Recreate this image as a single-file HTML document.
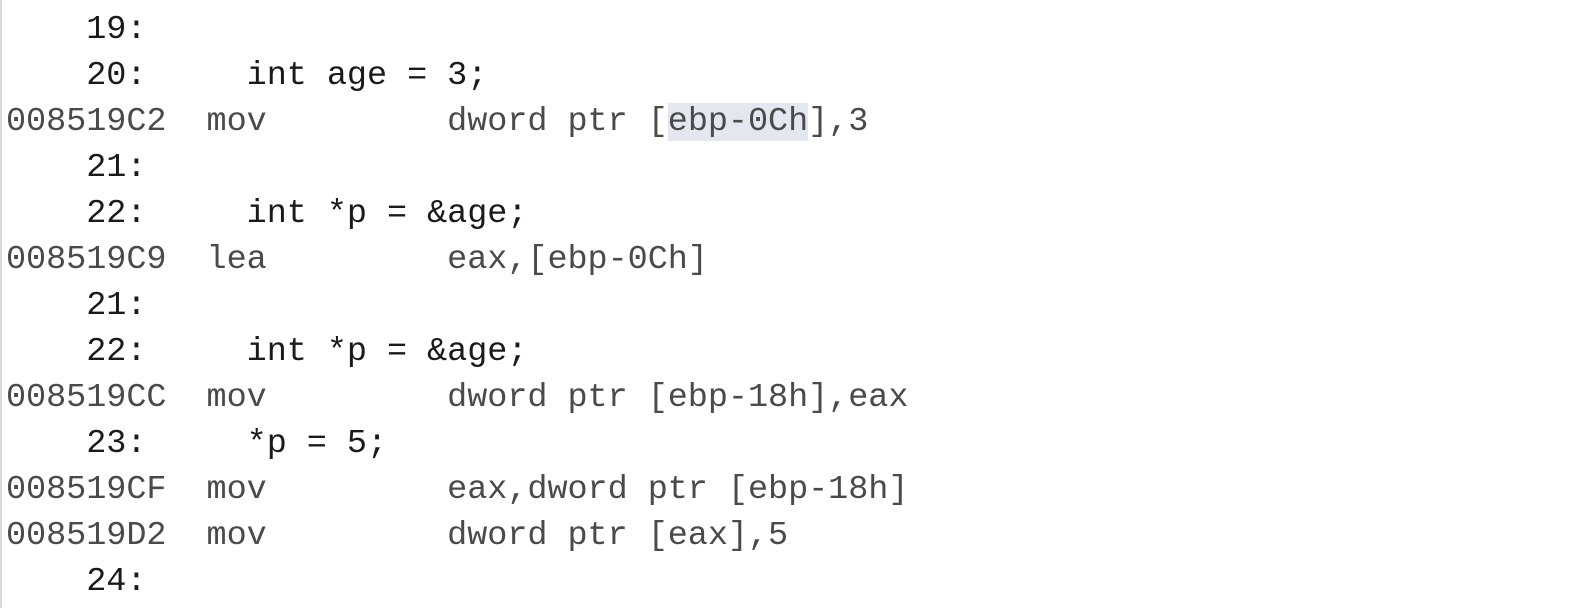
<!DOCTYPE html>
<html><head><style>
html,body{margin:0;padding:0;background:#fff;width:1588px;height:608px;overflow:hidden}
body{border-left:2px solid #d8d8d8;box-sizing:border-box;position:relative}
.l{position:absolute;left:4px;height:46px;line-height:46px;font-family:"Liberation Mono",monospace;font-size:33.5px;white-space:pre;letter-spacing:-0.05px}
.s{color:#1a1a1a}
.a{color:#4a4a4a}
.h{background:#e3e7ef}
</style></head><body>
<div class="l s" style="top:7px">    19:</div>
<div class="l s" style="top:53px">    20:     int age = 3;</div>
<div class="l a" style="top:99px">008519C2  mov         dword ptr [<span class="h">ebp-0Ch</span>],3</div>
<div class="l s" style="top:145px">    21:</div>
<div class="l s" style="top:191px">    22:     int *p = &amp;age;</div>
<div class="l a" style="top:237px">008519C9  lea         eax,[ebp-0Ch]</div>
<div class="l s" style="top:283px">    21:</div>
<div class="l s" style="top:329px">    22:     int *p = &amp;age;</div>
<div class="l a" style="top:375px">008519CC  mov         dword ptr [ebp-18h],eax</div>
<div class="l s" style="top:421px">    23:     *p = 5;</div>
<div class="l a" style="top:467px">008519CF  mov         eax,dword ptr [ebp-18h]</div>
<div class="l a" style="top:513px">008519D2  mov         dword ptr [eax],5</div>
<div class="l s" style="top:559px">    24:</div>
</body></html>
